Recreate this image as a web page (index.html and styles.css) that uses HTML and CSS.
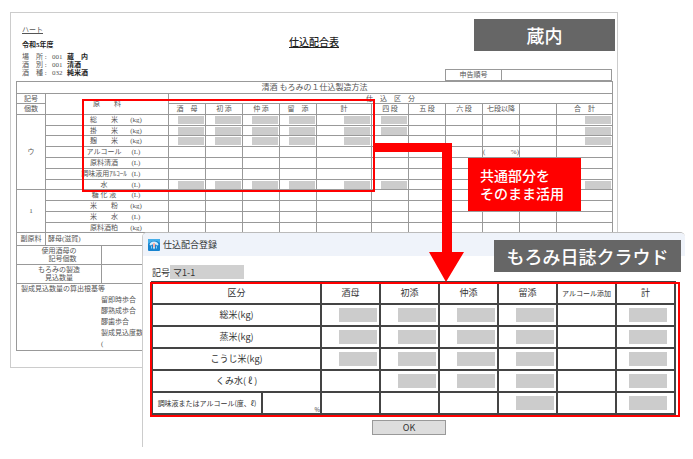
FILE: index.html
```html
<!DOCTYPE html>
<html lang="ja">
<head>
<meta charset="utf-8">
<title>仕込配合表</title>
<link rel="stylesheet" href="styles.css">
</head>
<body>
<main class="scene">
  <section class="sheet">
    <header class="sheet-head">
      <div class="meta">
        <p class="brand">ハート</p>
        <p class="year">令和5年度</p>
        <dl class="facts">
          <dt>場　所 :</dt><dd>001</dd><dd class="strong">蔵　内</dd>
          <dt>酒　別 :</dt><dd>001</dd><dd class="strong">清酒</dd>
          <dt>酒　種 :</dt><dd>032</dd><dd class="strong">純米酒</dd>
        </dl>
      </div>
      <h1 class="title">仕込配合表</h1>
      <table class="ledger number">
        <tr><th>申告順号</th><td></td></tr>
      </table>
    </header>

    <table class="ledger main">
      <colgroup>
        <col class="c-mark"><col class="c-name"><col class="c-s"><col class="c-s"><col class="c-s"><col class="c-s"><col class="c-sum"><col class="c-s"><col class="c-s"><col class="c-s"><col class="c-s"><col class="c-s"><col class="c-total">
      </colgroup>
      <thead>
        <tr class="r12"><th colspan="13" class="caption">清酒 もろみの１仕込製造方法</th></tr>
        <tr class="r10"><th>記号</th><th rowspan="2">原　　料</th><th colspan="11">仕　込　区　分</th></tr>
        <tr><th>個数</th><th>酒　母</th><th>初 添</th><th>仲 添</th><th>留　添</th><th>計</th><th>四 段</th><th>五 段</th><th>六 段</th><th>七段以降</th><th></th><th>合　計</th></tr>
      </thead>
      <tbody>
        <tr><th rowspan="7">ウ</th><th><span class="item"><span>総　　米</span><span>(kg)</span></span></th><td><i class="v"></i></td><td><i class="v"></i></td><td><i class="v"></i></td><td><i class="v"></i></td><td><i class="v"></i></td><td><i class="v"></i></td><td></td><td></td><td></td><td></td><td><i class="v"></i></td></tr>
        <tr class="r10"><th><span class="item"><span>掛　　米</span><span>(kg)</span></span></th><td><i class="v"></i></td><td><i class="v"></i></td><td><i class="v"></i></td><td><i class="v"></i></td><td><i class="v"></i></td><td><i class="v"></i></td><td></td><td></td><td></td><td></td><td><i class="v"></i></td></tr>
        <tr><th><span class="item"><span>麹　　米</span><span>(kg)</span></span></th><td><i class="v"></i></td><td><i class="v"></i></td><td><i class="v"></i></td><td><i class="v"></i></td><td><i class="v"></i></td><td></td><td></td><td></td><td></td><td></td><td><i class="v"></i></td></tr>
        <tr><th><span class="item"><span>アルコール</span><span>(L)</span></span></th><td></td><td></td><td></td><td></td><td></td><td></td><td></td><td></td><td><span class="rate"><span>(</span><span>%)</span></span></td><td></td><td></td></tr>
        <tr><th><span class="item"><span>原料清酒</span><span>(L)</span></span></th><td></td><td></td><td></td><td></td><td></td><td></td><td></td><td></td><td></td><td></td><td></td></tr>
        <tr><th><span class="item"><span>調味液用ｱﾙｺｰﾙ</span><span>(L)</span></span></th><td></td><td></td><td></td><td></td><td></td><td></td><td></td><td></td><td></td><td></td><td></td></tr>
        <tr class="r10"><th><span class="item"><span>水</span><span>(L)</span></span></th><td><i class="v"></i></td><td><i class="v"></i></td><td><i class="v"></i></td><td><i class="v"></i></td><td><i class="v"></i></td><td><i class="v"></i></td><td></td><td></td><td></td><td></td><td><i class="v"></i></td></tr>
        <tr><th rowspan="4">1</th><th><span class="item"><span>糖 化 液</span><span>(L)</span></span></th><td></td><td></td><td></td><td></td><td></td><td></td><td></td><td></td><td></td><td></td><td></td></tr>
        <tr><th><span class="item"><span>米　　粉</span><span>(kg)</span></span></th><td></td><td></td><td></td><td></td><td></td><td></td><td></td><td></td><td></td><td></td><td></td></tr>
        <tr><th><span class="item"><span>米　　水</span><span>(L)</span></span></th><td></td><td></td><td></td><td></td><td></td><td></td><td></td><td></td><td></td><td></td><td></td></tr>
        <tr class="r10"><th><span class="item"><span>原料酒粕</span><span>(kg)</span></span></th><td></td><td></td><td></td><td></td><td></td><td></td><td></td><td></td><td></td><td></td><td></td></tr>
      </tbody>
    </table>

    <table class="ledger sub">
      <colgroup><col class="c-mark"><col class="c-label"><col></colgroup>
      <tr class="r13"><th>副原料</th><td colspan="2" class="left">酵母(滋賀)</td></tr>
      <tr class="r19"><th colspan="2">使用酒母の<br>　記号個数</th><td></td></tr>
      <tr class="r19"><th colspan="2">もろみの製造<br>見込数量</th><td></td></tr>
      <tr class="r66"><td colspan="3" class="basis">
        <p>製成見込数量の算出根基等</p>
        <ul>
          <li>留即時歩合</li>
          <li>醪熟成歩合</li>
          <li>醪歯歩合</li>
          <li>製成見込度数</li>
          <li>(</li>
        </ul>
      </td></tr>
    </table>
  </section>

  <div class="tag tag-local">蔵内</div>
  <div class="frame frame-source"></div>

  <section class="dialog">
    <header class="bar">
      <svg class="app-icon" viewBox="0 0 12 12" aria-hidden="true">
        <rect width="12" height="12" rx="1" fill="#1683cf"/>
        <path d="M0 5V1a1 1 0 0 1 1-1h10a1 1 0 0 1 1 1v3Q6-1 0 5Z" fill="#45aee9"/>
        <path d="M1.500 6Q2 2.500 6 2.500T10.500 6L9 6.500 8 5.500H4L3 6.500Z" fill="#d5eefc"/>
        <path d="M3 7.500 4 6.500V9.500H3ZM8 6.500l1 1v2H8Z" fill="#8fd0f5"/>
        <path d="M5 4h2v4.500H5Z" fill="#fff"/>
        <path d="M5.500 4h1v4h-1Z" fill="#ef5c4d"/>
        <path d="M5 8.500h2L6 10.500Z" fill="#fff"/>
      </svg>
      <h2>仕込配合登録</h2>
    </header>
    <form class="form">
      <div class="field"><label for="code">記号</label><input id="code" type="text" value="マ1-1" readonly></div>
      <table class="entry">
        <colgroup><col class="e-name"><col class="e-cell"><col class="e-cell"><col class="e-cell"><col class="e-cell"><col class="e-cell"><col class="e-cell"><col class="e-cell"></colgroup>
        <thead>
          <tr><th colspan="2">区分</th><th>酒母</th><th>初添</th><th>仲添</th><th>留添</th><th class="small">アルコール添加</th><th>計</th></tr>
        </thead>
        <tbody>
          <tr><th colspan="2">総米(kg)</th><td><i class="v"></i></td><td><i class="v"></i></td><td><i class="v"></i></td><td><i class="v"></i></td><td></td><td><i class="v"></i></td></tr>
          <tr><th colspan="2">蒸米(kg)</th><td><i class="v"></i></td><td><i class="v"></i></td><td><i class="v"></i></td><td><i class="v"></i></td><td></td><td><i class="v"></i></td></tr>
          <tr><th colspan="2">こうじ米(kg)</th><td><i class="v"></i></td><td><i class="v"></i></td><td><i class="v"></i></td><td><i class="v"></i></td><td></td><td><i class="v"></i></td></tr>
          <tr><th colspan="2">くみ水( ℓ )</th><td></td><td><i class="v"></i></td><td><i class="v"></i></td><td><i class="v"></i></td><td></td><td><i class="v"></i></td></tr>
          <tr><th class="small">調味液またはアルコール(度、ℓ)</th><td class="percent">%</td><td></td><td></td><td></td><td><i class="v"></i></td><td></td><td><i class="v"></i></td></tr>
        </tbody>
      </table>
      <button type="button" class="ok">OK</button>
    </form>
  </section>

  <div class="frame frame-target"></div>
  <div class="tag tag-cloud">もろみ日誌クラウド</div>
  <svg class="arrow" viewBox="0 0 90 140" aria-hidden="true"><path d="M0 1H77V110H89L71 140L54 110H67V10H0Z" fill="#f00"/></svg>
  <p class="note"><span>共通部分を</span><span>そのまま活用</span></p>
</main>
</body>
</html>
```
FILE: styles.css
```css
* { box-sizing: border-box; }

body {
  margin: 0;
  background: #fff;
  color: #333;
  font-family: "Noto Sans CJK JP", sans-serif;
}

h1, h2, p, dl, dd, ul { margin: 0; padding: 0; }
ul { list-style: none; }

table {
  border-collapse: collapse;
  table-layout: fixed;
}

th, td { padding: 0; font-weight: 400; }

.v {
  display: block;
  margin-left: auto;
  background: #ccc;
}

.scene {
  position: relative;
  min-height: 459px;
  padding: 12px 75px 0 10px;
}

/* Printed sheet */
.sheet {
  padding: 0 5px 16px;
  border: 1px solid #ccc;
  font-family: "Liberation Serif", "Noto Sans CJK JP", serif;
  font-size: 7px;
  line-height: 8px;
  color: #555;
}

.sheet-head {
  display: grid;
  grid-template-columns: 1fr auto 1fr;
  height: 68px;
}

.meta { padding: 12px 0 0 6px; }
.brand { line-height: 10px; text-decoration: underline; }
.year { margin: 5px 0 3px; line-height: 10px; font-weight: 700; color: #222; }

.facts {
  display: grid;
  grid-template-columns: 30px 15px 1fr;
}

.facts .strong { font-weight: 700; color: #222; }

.title {
  padding-top: 23px;
  font-size: 10px;
  line-height: 14px;
  font-weight: 500;
  text-decoration: underline;
  color: #222;
}

.ledger { width: 100%; }
.ledger th, .ledger td { border: 1px solid #999; }
.ledger tr { height: 11px; }
.ledger .r10 { height: 10px; }
.ledger .r12 { height: 12px; }
.ledger .r13 { height: 13px; }
.ledger .r19 { height: 19px; }
.ledger .r66 { height: 66px; }

.number {
  width: 167px;
  align-self: end;
  justify-self: end;
}
.number th { width: 56px; }

.c-mark { width: 29px; }
.c-name { width: 123px; }
.c-s { width: 37px; }
.c-sum { width: 55px; }
.c-total { width: 56px; }
.c-label { width: 56px; }

.caption { font-size: 8px; }

.main .v { width: 26px; height: 8px; margin-right: 1px; }

.item {
  display: grid;
  grid-template-columns: 48px 14px;
  column-gap: 1px;
  padding-left: 34px;
  white-space: nowrap;
}

.rate { display: flex; justify-content: space-between; }

.sub { margin-top: -1px; }
.sub .left { padding-left: 2px; }
.sub .basis { padding: 0 4px; line-height: 11px; vertical-align: top; }
.basis ul { padding-left: 80px; }

/* Labels and frames laid over the sheet */
.tag {
  position: absolute;
  background: #666;
  color: #fff;
  font-size: 18px;
  line-height: 32px;
  font-weight: 500;
  text-align: center;
}
.tag-local { top: 19px; left: 474px; width: 141px; }
.tag-cloud { top: 240px; left: 494px; width: 187px; }

.frame { position: absolute; border: 2px solid #f00; }
.frame-source { top: 99px; left: 82px; width: 293px; height: 93px; }
.frame-target { top: 282px; left: 150px; width: 530px; height: 135px; }

.arrow { position: absolute; top: 142px; left: 375px; width: 90px; height: 140px; }

.note {
  position: absolute;
  top: 158px;
  left: 468px;
  width: 113px;
  padding: 8px 12px 9px;
  background: #f00;
  color: #fff;
  font-size: 14px;
  line-height: 18px;
  font-weight: 500;
  white-space: nowrap;
}
.note span { display: block; }

/* Registration dialog */
.dialog {
  position: absolute;
  top: 232px;
  left: 142px;
  right: 8px;
  height: 215px;
  border-top: 1px solid #bbb;
  border-left: 1px solid #ccc;
  border-radius: 5px 5px 0 0;
  background: #fff;
  overflow: hidden;
  font-size: 9px;
}

.bar {
  display: flex;
  align-items: center;
  gap: 3px;
  height: 23px;
  padding-left: 5px;
  background: #eff3fa;
}
.bar h2 { font-size: 9px; font-weight: 400; }
.app-icon { width: 12px; height: 12px; }

.form {
  display: flex;
  flex-direction: column;
  padding: 9px 10px 0 8px;
}

.field { display: flex; align-items: center; padding-left: 1px; }
.field input {
  width: 74px;
  height: 14px;
  padding: 0 3px;
  border: 0;
  background: #d0d0d0;
  color: #333;
  font: inherit;
}

.entry { width: 100%; margin-top: 2px; line-height: 12px; }
.entry tr { height: 22px; }
.entry th, .entry td { border: 2px solid #444; }
.entry .small { font-size: 7px; white-space: nowrap; }
.e-name { width: 110px; }
.e-cell { width: 59px; }
.entry .v { width: 38px; height: 14px; margin-right: 2px; }
.entry td:last-child .v { margin-right: 7px; }
.entry .percent { font-size: 6px; line-height: 7px; text-align: right; vertical-align: bottom; }

.ok {
  align-self: center;
  width: 74px;
  height: 15px;
  margin: 5px 8px 0 0;
  padding: 0;
  border: 1px solid #999;
  background: #ddd;
  color: #333;
  font: inherit;
  line-height: 13px;
}
```
